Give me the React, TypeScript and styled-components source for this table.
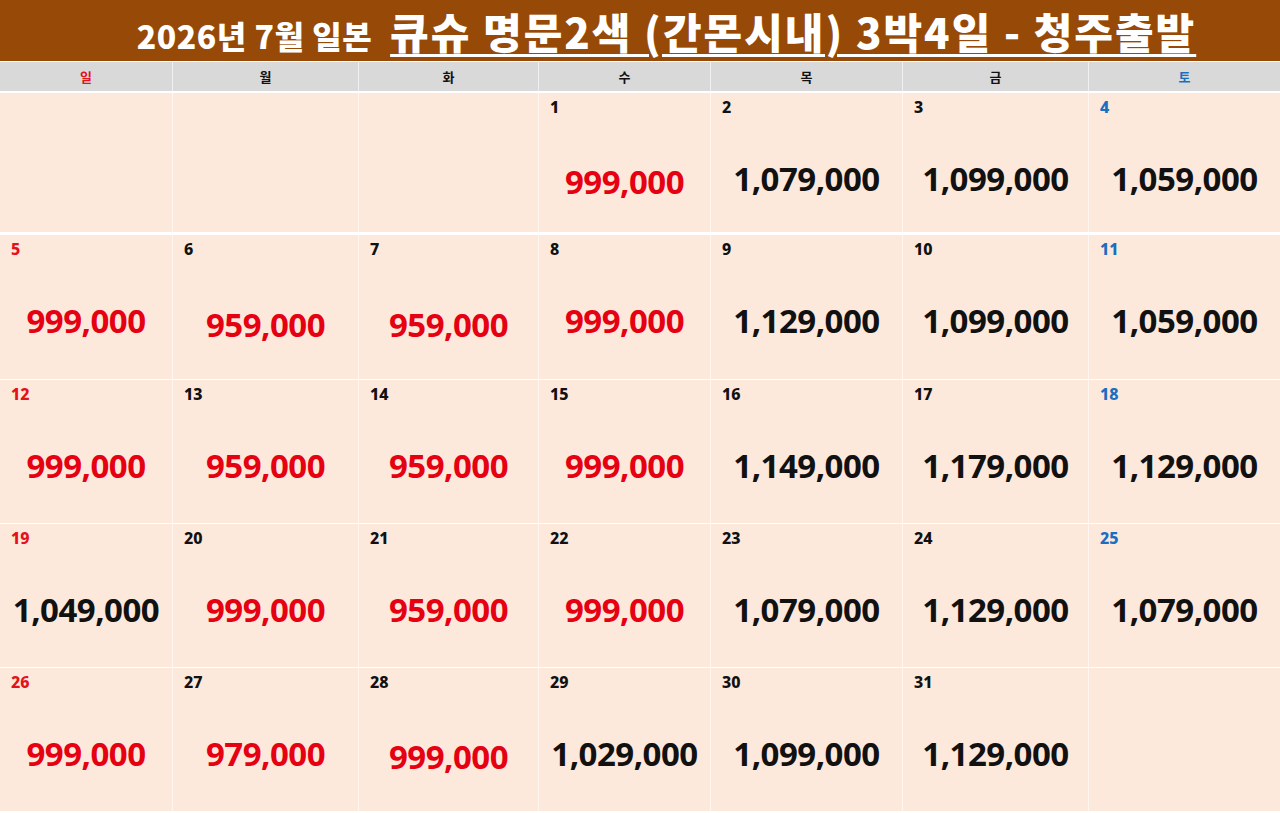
import React from 'react';
import styled, { createGlobalStyle } from 'styled-components';

type Day = {
  n: number;
  price: string;
  red?: boolean;
  drop?: number;
} | null;

const WEEK = ['일', '월', '화', '수', '목', '금', '토'];
const COLS = '172px 186px 180px 172px 192px 186px 192px';

const ROWS: Day[][] = [
  [
    null,
    null,
    null,
    { n: 1, price: '999,000', red: true, drop: 3 },
    { n: 2, price: '1,079,000' },
    { n: 3, price: '1,099,000' },
    { n: 4, price: '1,059,000' },
  ],
  [
    { n: 5, price: '999,000', red: true },
    { n: 6, price: '959,000', red: true, drop: 4 },
    { n: 7, price: '959,000', red: true, drop: 4 },
    { n: 8, price: '999,000', red: true },
    { n: 9, price: '1,129,000' },
    { n: 10, price: '1,099,000' },
    { n: 11, price: '1,059,000' },
  ],
  [
    { n: 12, price: '999,000', red: true },
    { n: 13, price: '959,000', red: true },
    { n: 14, price: '959,000', red: true },
    { n: 15, price: '999,000', red: true },
    { n: 16, price: '1,149,000' },
    { n: 17, price: '1,179,000' },
    { n: 18, price: '1,129,000' },
  ],
  [
    { n: 19, price: '1,049,000' },
    { n: 20, price: '999,000', red: true },
    { n: 21, price: '959,000', red: true },
    { n: 22, price: '999,000', red: true },
    { n: 23, price: '1,079,000' },
    { n: 24, price: '1,129,000' },
    { n: 25, price: '1,079,000' },
  ],
  [
    { n: 26, price: '999,000', red: true },
    { n: 27, price: '979,000', red: true },
    { n: 28, price: '999,000', red: true, drop: 3 },
    { n: 29, price: '1,029,000' },
    { n: 30, price: '1,099,000' },
    { n: 31, price: '1,129,000' },
    null,
  ],
];

const ROW_HEIGHTS = [139, 144, 143, 143, 143];

const dayColor = (col: number) =>
  col === 0 ? '#e3121b' : col === 6 ? '#1b6fbf' : '#111111';

const App: React.FC = () => (
  <Page>
    <GlobalStyle />
    <TitleBar>
      <Title>
        <Small>2026년 7월 일본</Small>
        <Big>큐슈 명문2색 (간몬시내) 3박4일 - 청주출발</Big>
      </Title>
    </TitleBar>
    <WeekRow>
      {WEEK.map((w, i) => (
        <WeekCell key={w} $color={dayColor(i)}>
          {w}
        </WeekCell>
      ))}
    </WeekRow>
    {ROWS.map((row, r) => (
      <DateRow key={r} $h={ROW_HEIGHTS[r]} $first={r === 0}>
        {row.map((d, c) => (
          <Cell key={c}>
            {d && (
              <>
                <DayNum $color={dayColor(c)}>{d.n}</DayNum>
                <Price $red={d.red} $drop={d.drop || 0}>
                  {d.price}
                </Price>
              </>
            )}
          </Cell>
        ))}
      </DateRow>
    ))}
  </Page>
);

const GlobalStyle = createGlobalStyle`
  html, body {
    margin: 0;
    padding: 0;
    background: #ffffff;
  }
  body {
    font-family: "Noto Sans CJK KR", "Noto Sans", sans-serif;
  }
`;

const Page = styled.div`
  width: 1280px;
  height: 813px;
  overflow: hidden;
  display: flex;
  flex-direction: column;
  background: #ffffff;
`;

const TitleBar = styled.header`
  height: 61px;
  background: #974a08;
  display: flex;
  justify-content: center;
  align-items: flex-end;
  margin-bottom: 1px;
  flex-shrink: 0;
`;

const Title = styled.h1`
  margin: 0 0 0 53px;
  display: flex;
  align-items: baseline;
  gap: 18px;
  color: #ffffff;
  font-weight: 900;
  white-space: nowrap;
  line-height: 1;
  padding-bottom: 9px;
`;

const Small = styled.span`
  font-size: 32px;
  letter-spacing: 0.5px;
`;

const Big = styled.span`
  font-size: 42px;
  letter-spacing: 2px;
  text-decoration: underline;
  text-decoration-thickness: 3px;
  text-underline-offset: 5px;
`;

const WeekRow = styled.div`
  display: grid;
  grid-template-columns: ${COLS};
  height: 29px;
  background: #d9d9d9;
  margin-bottom: 2px;
  flex-shrink: 0;
`;

const WeekCell = styled.div<{ $color: string }>`
  display: flex;
  align-items: center;
  justify-content: center;
  font-size: 13px;
  font-weight: 700;
  color: ${p => p.$color};
  border-left: 1px solid #f0f0f0;

  &:first-child {
    border-left: none;
  }
`;

const DateRow = styled.div<{ $h: number; $first: boolean }>`
  display: grid;
  grid-template-columns: ${COLS};
  height: ${p => p.$h}px;
  background: #fce9dc;
  margin-bottom: ${p => (p.$first ? 3 : 1)}px;
  flex-shrink: 0;
`;

const Cell = styled.div`
  display: flex;
  flex-direction: column;
  padding: 5px 0 0 11px;
  border-left: 1px solid #fff6ef;
  box-sizing: border-box;

  &:first-child {
    border-left: none;
  }
`;

const DayNum = styled.div<{ $color: string }>`
  font-family: "Noto Sans", "Noto Sans CJK KR", sans-serif;
  font-size: 16px;
  font-weight: 800;
  line-height: 18px;
  color: ${p => p.$color};
`;

const Price = styled.div<{ $red?: boolean; $drop: number }>`
  margin: ${p => 43 + p.$drop}px 11px 0 0;
  text-align: center;
  font-family: "Noto Sans", sans-serif;
  font-size: 33px;
  font-weight: 700;
  line-height: 40px;
  letter-spacing: -0.5px;
  color: ${p => (p.$red ? '#e50012' : '#111111')};
`;

export default App;
